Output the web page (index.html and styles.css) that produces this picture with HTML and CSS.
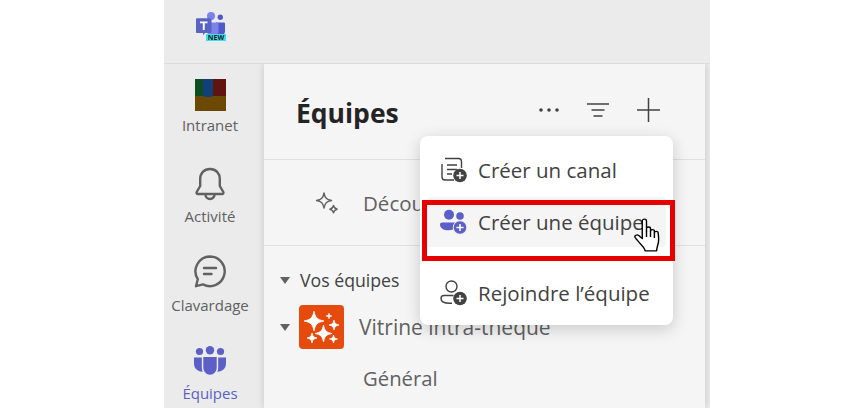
FILE: index.html
```html
<!DOCTYPE html>
<html lang="fr">
<head>
    <meta charset="UTF-8">
    <meta name="viewport" content="width=device-width, initial-scale=1.0">
    <title>Équipes</title>
    <link rel="stylesheet" href="styles.css">
</head>
<body>
    <div class="app">
        <div class="topbar">
            <svg class="teams-logo" width="30" height="28" viewBox="0 0 30 28">
                <circle cx="15" cy="4" r="4" fill="#7b83eb"/>
                <circle cx="24.300" cy="5.300" r="2.700" fill="#5059c9"/>
                <path d="M20 10.500h8a1 1 0 0 1 1 1v7.500a4 4 0 0 1-4 4h-5z" fill="#5059c9"/>
                <path d="M11 10.500h10.500a1 1 0 0 1 1 1V20a5.500 5.500 0 0 1-11 0z" fill="#7b83eb"/>
                <path d="M1 6.300h13.500a1 1 0 0 1 1 1V20a1 1 0 0 1-1 1H9l-2 2.200V21H1a1 1 0 0 1-1-1V7.300a1 1 0 0 1 1-1z" fill="#5a62c3"/>
                <path d="M4 9.500h7.500v1.700H8.700V18H6.800v-6.800H4z" fill="#fff"/>
            </svg>
            <span class="new-badge">NEW</span>
        </div>
        <div class="main">
            <nav class="rail">
                <a class="rail-item rail-intranet">
                    <div class="thumb"><span class="thumb-blue"></span></div>
                    <span>Intranet</span>
                </a>
                <a class="rail-item rail-activity">
                    <svg width="32" height="36" viewBox="0 0 32 36" fill="none" stroke="#616161" stroke-width="2.400">
                        <path d="M16 2c-6 0-9.800 4.500-9.800 10v7L2.700 25c-.5 1 .1 2 1.200 2h24.200c1.100 0 1.700-1 1.200-2l-3.500-6v-7c0-5.500-3.800-10-9.800-10z" stroke-linejoin="round"/>
                        <path d="M11.500 27.500a4.500 4.500 0 0 0 9 0"/>
                    </svg>
                    <span>Activité</span>
                </a>
                <a class="rail-item rail-chat">
                    <svg width="32" height="33" viewBox="0 0 32 33" fill="none" stroke="#616161" stroke-width="2.400" stroke-linecap="round">
                        <path d="M16 1.500a14.800 14.800 0 1 1-7 27.900L2 31.200l1.800-7A14.800 14.800 0 0 1 16 1.500z" stroke-linejoin="round"/>
                        <path d="M10 13h12M10 19h7.500"/>
                    </svg>
                    <span>Clavardage</span>
                </a>
                <a class="rail-item rail-teams active">
                    <svg width="32" height="29" viewBox="0 0 32 29" fill="#5b5fc7">
                        <circle cx="16" cy="4.200" r="4.200"/>
                        <circle cx="5.500" cy="5.500" r="3.600"/>
                        <circle cx="26.500" cy="5.500" r="3.600"/>
                        <path d="M0 11.500h7.800v10c0 1.600.3 3 .9 4.200C3.500 25.800 0 22.300 0 17.500z"/>
                        <path d="M32 11.500h-7.800v10c0 1.600-.3 3-.9 4.200 5.200.1 8.700-3.400 8.700-8.200z"/>
                        <path d="M9.300 11h13.400v10.500c0 4-3 7.200-6.700 7.200s-6.700-3.200-6.700-7.200z"/>
                    </svg>
                    <span>Équipes</span>
                </a>
            </nav>
            <section class="panel">
                <header class="panel-head">
                    <h1>Équipes</h1>
                    <div class="head-actions">
                        <svg width="20" height="6" viewBox="0 0 20 6" fill="#424242">
                            <circle cx="2" cy="3" r="1.800"/><circle cx="10" cy="3" r="1.800"/><circle cx="18" cy="3" r="1.800"/>
                        </svg>
                        <svg width="22" height="14" viewBox="0 0 22 14" stroke="#424242" stroke-width="1.500">
                            <path d="M0 1h22M4.500 7h13M6.500 13h9"/>
                        </svg>
                        <svg width="23" height="24" viewBox="0 0 23 24" stroke="#424242" stroke-width="1.500">
                            <path d="M0 12h23M11.500 0v24"/>
                        </svg>
                    </div>
                </header>
                <div class="discover">
                    <svg width="26" height="26" viewBox="0 0 26 26" fill="none" stroke="#616161" stroke-width="1.400" stroke-linejoin="round">
                        <path d="M10 3c1 5 2.500 6.500 7.500 7.500-5 1-6.500 2.500-7.500 7.500-1-5-2.500-6.500-7.500-7.500C7.500 9.500 9 8 10 3z"/>
                        <path d="M19.500 15.500c.5 2.500 1.200 3.200 3.700 3.700-2.500.5-3.200 1.200-3.700 3.700-.5-2.500-1.200-3.200-3.700-3.700 2.500-.5 3.200-1.200 3.700-3.700z"/>
                    </svg>
                    <span>Découvrir</span>
                </div>
                <div class="team-list">
                    <div class="section-title"><i class="caret"></i><span>Vos équipes</span></div>
                    <div class="team-row">
                        <i class="caret"></i>
                        <div class="team-logo">
                            <svg width="44" height="44" viewBox="0 0 44 44" fill="#fff" stroke="#fff" stroke-width=".8" stroke-linejoin="round">
                                <path d="M15 6c1.500 7 3 8.500 10 10-7 1.500-8.500 3-10 10-1.500-7-3-8.500-10-10 7-1.500 8.500-3 10-10z"/>
                                <path d="M30 8.300c.5 2 .7 2.200 2.700 2.700-2 .5-2.200.7-2.700 2.700-.5-2-.7-2.200-2.700-2.700 2-.5 2.200-.7 2.700-2.700z"/>
                                <path d="M35 15c.8 3.500 1.500 4.200 5 5-3.500.8-4.200 1.500-5 5-.8-3.500-1.500-4.200-5-5 3.500-.8 4.200-1.500 5-5z"/>
                                <path d="M24.500 20c1.300 6 2.500 7.200 8.500 8.500-6 1.300-7.200 2.500-8.500 8.500-1.300-6-2.500-7.200-8.500-8.500 6-1.300 7.200-2.500 8.500-8.500z"/>
                                <path d="M13 28c.8 3.500 1.500 4.200 5 5-3.500.8-4.200 1.500-5 5-.8-3.500-1.500-4.200-5-5 3.500-.8 4.200-1.500 5-5z"/>
                                <path d="M34.500 30c.7 3 1 3.300 4 4-3 .7-3.300 1-4 4-.7-3-1-3.300-4-4 3-.7 3.300-1 4-4z"/>
                            </svg>
                        </div>
                        <span class="team-name">Vitrine intra-thèque</span>
                    </div>
                    <div class="channel">Général</div>
                </div>
            </section>
            <div class="strip"></div>
        </div>

        <div class="menu">
            <div class="menu-item">
                <svg width="28" height="26" viewBox="0 0 28 26" fill="none" stroke="#424242" stroke-width="1.400">
                    <path d="M5 1.500h13.500a3 3 0 0 1 3 3V11M14 23H5a3 3 0 0 1-3-3V7"/>
                    <path d="M7 8h10M7 12.500h10M7 17h5M2 4v0"/>
                    <circle cx="20" cy="18.500" r="6.800" fill="#424242" stroke="none"/>
                    <path d="M20 15v7M16.500 18.500h7" stroke="#fff" stroke-width="1.500"/>
                </svg>
                <span>Créer un canal</span>
            </div>
            <div class="menu-item hover">
                <svg width="28" height="26" viewBox="0 0 28 26" fill="#5b5fc7">
                    <circle cx="9" cy="5.800" r="5"/>
                    <circle cx="20" cy="7" r="3.800"/>
                    <path d="M0 15.500a2 2 0 0 1 2-2h12.500a2 2 0 0 1 1.500.700 8 8 0 0 0-3 6.300c-1.200.5-2.700.8-4.500.8-5 0-8.500-2.300-8.500-5.800z"/>
                    <circle cx="20" cy="18.500" r="6.800" stroke="#f5f5f5" stroke-width="1"/>
                    <path d="M20 15v7M16.500 18.500h7" stroke="#fff" stroke-width="1.500"/>
                </svg>
                <span>Créer une équipe</span>
            </div>
            <div class="menu-sep"></div>
            <div class="menu-item">
                <svg width="28" height="26" viewBox="0 0 28 26" fill="none" stroke="#424242" stroke-width="1.400">
                    <circle cx="11.500" cy="6.500" r="5.500"/>
                    <path d="M13.500 15.500H4a3 3 0 0 0-3 3c0 3 3.500 4.800 9 4.800h2"/>
                    <circle cx="20" cy="18.500" r="6.800" fill="#424242" stroke="none"/>
                    <path d="M20 15v7M16.500 18.500h7" stroke="#fff" stroke-width="1.500"/>
                </svg>
                <span>Rejoindre l’équipe</span>
            </div>
        </div>

        <div class="highlight"></div>

        <svg class="cursor" width="33" height="36" viewBox="0 0 28 34" preserveAspectRatio="none" fill="#fff" stroke="#000" stroke-width="1.200" stroke-linejoin="round">
            <path d="M7 3c0-2.600 3.600-2.600 3.600 0v9.500V10c0-2 3.400-2 3.400 0v2.500c0-2 3.300-2 3.300 0V14c0-1.800 3.200-1.800 3.200 0 .5 4 .8 8-.3 11.500-.6 2-1 3-1 5.500H9.500c-.5-3-3-5-5.500-8.500L1 18.500c-1-2 1.500-3.300 3-2l3 3z"/>
            <path d="M10.600 12v6M14 12v6M17.300 14v5" fill="none"/>
        </svg>
    </div>
</body>
</html>
```

FILE: styles.css
```css
* {
    box-sizing: border-box;
}
body {
    margin: 0;
    background-color: #fff;
    font-family: "Open Sans", Arial, sans-serif;
    overflow: hidden;
}
svg {
    display: block;
    flex: none;
}
.app {
    position: relative;
    width: 546px;
    height: 408px;
    margin-left: 164px;
    background-color: #ebebeb;
    overflow: hidden;
}
.topbar {
    position: relative;
    height: 64px;
    padding: 12px 0 0 32px;
    border-bottom: 1px solid #dcdcdc;
}
.new-badge {
    position: absolute;
    left: 42px;
    top: 34px;
    width: 20px;
    height: 7px;
    background-color: #3ee0e8;
    color: #1b1b2f;
    font-size: 7px;
    font-weight: 700;
    line-height: 7px;
    text-align: center;
}
.main {
    display: flex;
    height: 344px;
    overflow: hidden;
}
.rail {
    width: 100px;
    flex: none;
    padding-right: 8px;
}
.rail-item {
    display: flex;
    flex-direction: column;
    align-items: center;
    color: #616161;
    font-size: 15px;
    line-height: 20px;
}
.rail-intranet {
    padding-top: 15px;
    gap: 4px;
}
.rail-activity {
    padding-top: 32px;
    gap: 3px;
}
.rail-chat {
    padding-top: 29px;
    gap: 7px;
}
.rail-teams {
    padding-top: 31px;
    gap: 8px;
}
.rail-item.active {
    color: #5b5fc7;
}
.thumb {
    position: relative;
    width: 31px;
    height: 32px;
    background-color: #6b4a00;
}
.thumb::before {
    content: "";
    display: block;
    height: 17px;
    background: linear-gradient(90deg, #0e4d1f 0 34%, #5f140f 34% 100%);
}
.thumb-blue {
    position: absolute;
    left: 8px;
    top: 0;
    width: 10px;
    height: 18px;
    border-radius: 0 0 3px 3px;
    background-color: #123f7a;
}
.panel {
    flex: 1;
    background-color: #f5f5f5;
    box-shadow: 0 0 8px rgba(0, 0, 0, 0.16);
}
.panel-head {
    display: flex;
    align-items: center;
    justify-content: space-between;
    height: 96px;
    padding: 0 45px 0 32px;
    border-bottom: 1px solid #e0e0e0;
}
.panel-head h1 {
    margin: 2px 0 0;
    color: #242424;
    font-size: 26.5px;
    font-weight: 700;
}
.head-actions {
    display: flex;
    align-items: center;
    gap: 28px;
    margin-bottom: 4px;
}
.discover {
    display: flex;
    align-items: center;
    gap: 23px;
    height: 86px;
    padding-left: 50px;
    border-bottom: 1px solid #e0e0e0;
    color: #616161;
    font-size: 20.5px;
}
.team-list {
    padding-top: 20px;
}
.section-title {
    display: flex;
    align-items: center;
    gap: 10px;
    height: 28px;
    padding-left: 16px;
    color: #424242;
    font-size: 17.7px;
}
.caret {
    width: 0;
    height: 0;
    flex: none;
    border-top: 7px solid #616161;
    border-left: 5px solid transparent;
    border-right: 5px solid transparent;
}
.team-row {
    display: flex;
    align-items: center;
    height: 44px;
    margin-top: 11px;
    padding-left: 16px;
    color: #616161;
    font-size: 21px;
}
.team-logo {
    width: 45px;
    height: 44px;
    margin-left: 9px;
    border-radius: 4px;
    background-color: #e64a0c;
}
.team-name {
    margin-left: 15px;
}
.channel {
    margin-top: 15px;
    padding-left: 99px;
    color: #616161;
    font-size: 20.3px;
}
.strip {
    width: 5px;
    flex: none;
}
.menu {
    position: absolute;
    left: 256px;
    top: 136px;
    width: 253px;
    height: 189px;
    padding-top: 9px;
    border-radius: 8px;
    background-color: #fff;
    box-shadow: 0 4px 16px rgba(0, 0, 0, 0.18);
}
.menu-item {
    display: flex;
    align-items: center;
    gap: 10px;
    height: 50px;
    margin: 0 7px;
    padding-left: 13px;
    border-radius: 4px;
    color: #424242;
    font-size: 20.5px;
}
.menu-item.hover {
    margin-top: 2px;
    background-color: #f5f5f5;
}
.menu-sep {
    height: 21px;
}
.highlight {
    position: absolute;
    left: 258px;
    top: 200px;
    width: 253px;
    height: 61px;
    border: 5px solid #e60000;
}
.cursor {
    position: absolute;
    left: 470px;
    top: 218px;
}
```
